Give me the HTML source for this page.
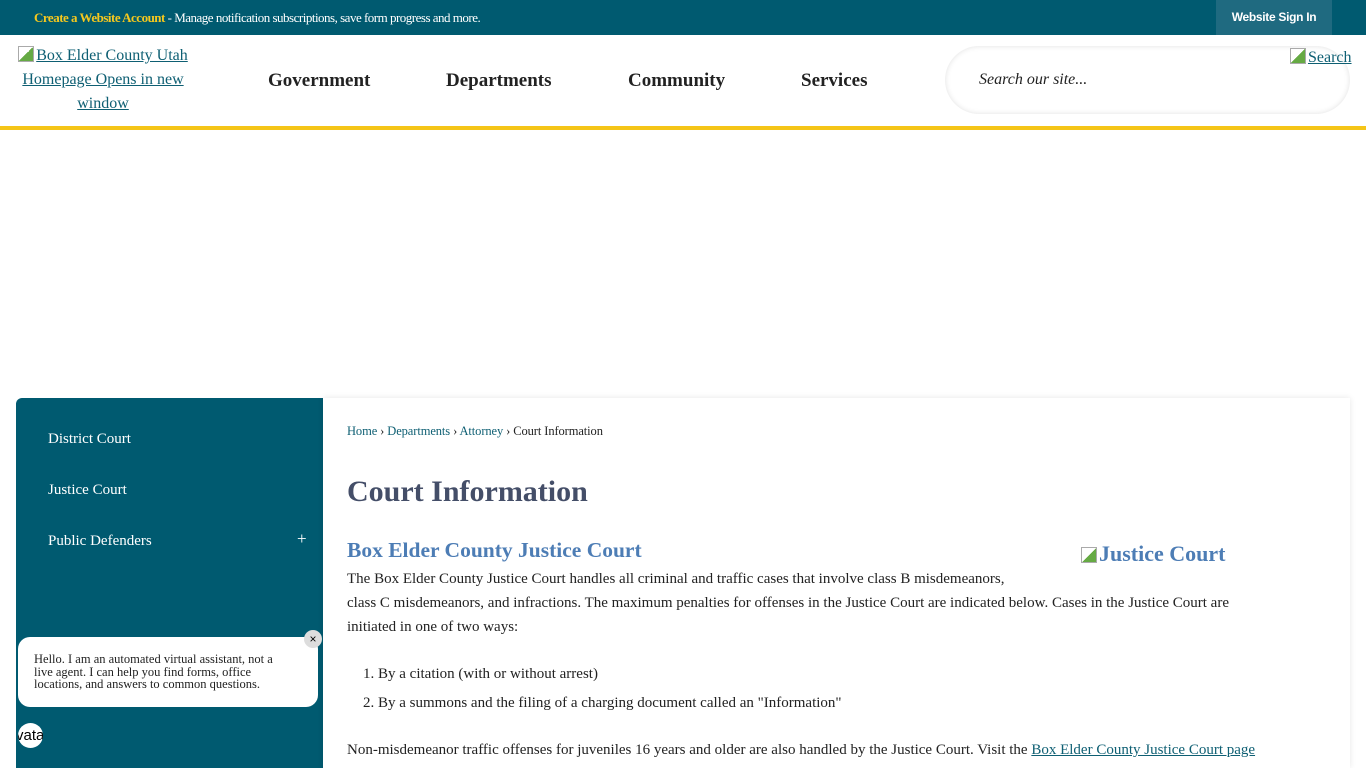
<!DOCTYPE html>
<html><head><meta charset="utf-8"><style>
*{box-sizing:border-box}
body{margin:0;width:1366px;height:768px;overflow:hidden;background:#fff;font-family:"Liberation Serif",serif;position:relative}
.top{position:absolute;left:0;top:0;width:1366px;height:35px;background:#005a70;}
.top .msg{position:absolute;left:34px;top:10px;font-size:13px;color:#fff;letter-spacing:-0.5px}
.top .msg b{color:#f5c81e}
.top .sign{position:absolute;left:1216px;top:0;width:116px;height:35px;background:#1f6a80;color:#fff;font-family:"Liberation Sans",sans-serif;font-weight:bold;font-size:12px;text-align:center;line-height:35px;letter-spacing:-0.3px}
.head{position:absolute;left:0;top:35px;width:1366px;height:91px;background:#fff}
.ybar{position:absolute;left:0;top:126px;width:1366px;height:4px;background:#f5c518}
a{color:#0e5f73}
.logo{position:absolute;left:14px;top:44px;width:178px;text-align:center;font-size:16px;line-height:24px}
.bi{display:inline-block;width:16px;height:16px;border:1px solid #aaa;background:linear-gradient(135deg,#fff 50%,#6a4 50%);vertical-align:-2px;margin-right:2px}
.nav{position:absolute;top:70px;font-size:19px;font-weight:bold;color:#222}
.search{position:absolute;left:945px;top:46px;width:405px;height:68px;border-radius:34px;box-shadow:0 0 6px rgba(0,0,0,.12) inset;background:#fff}
.search span{position:absolute;left:34px;top:25px;font-style:italic;font-size:16px;color:#222}
.sbtn{position:absolute;left:1290px;top:48px;font-size:16px}
.side{position:absolute;left:16px;top:398px;width:307px;height:370px;background:#005a70;border-radius:6px 0 0 0}
.side div{position:absolute;left:32px;color:#fff;font-size:15px}
.main{position:absolute;left:323px;top:398px;width:1027px;height:370px;background:#fff;box-shadow:0 0 6px rgba(0,0,0,.1)}
.crumb{position:absolute;left:347px;top:424px;font-size:12.5px;color:#222;letter-spacing:-0.1px}
.crumb a{text-decoration:none}
h1{position:absolute;left:347px;top:475px;margin:0;font-size:30px;color:#444e68}
h2{position:absolute;left:347px;top:538px;margin:0;font-size:21.5px;color:#4d7db5}
.img{position:absolute;left:1081px;top:541px;font-size:22px;font-weight:bold;color:#4d7db5}
.p{position:absolute;left:347px;font-size:15px;color:#222;line-height:24px;width:920px}
.chat{position:absolute;left:18px;top:637px;width:300px;height:70px;background:#fff;border-radius:12px;font-size:12.5px;line-height:12.5px;padding:16px 40px 16px 16px;color:#222}
.x{position:absolute;left:304px;top:630px;width:18px;height:18px;border-radius:9px;background:#ddd;font-size:12px;text-align:center;line-height:18px;font-family:"Liberation Sans",sans-serif}
.av{position:absolute;left:18px;top:723px;width:25px;height:25px;border-radius:13px;background:#fff;overflow:hidden;font-family:"Liberation Sans",sans-serif;font-size:15px;line-height:25px;text-indent:-2px}
</style></head><body>
<div class="top"><div class="msg"><b>Create a Website Account</b> - Manage notification subscriptions, save form progress and more.</div><div class="sign">Website Sign In</div></div>
<div class="head"></div>
<div class="logo"><span class="bi"></span><a href="#">Box Elder County Utah Homepage Opens in new window</a></div>
<div class="nav" style="left:268px">Government</div>
<div class="nav" style="left:446px">Departments</div>
<div class="nav" style="left:628px">Community</div>
<div class="nav" style="left:801px">Services</div>
<div class="search"><span>Search our site...</span></div>
<div class="sbtn"><span class="bi"></span><a href="#">Search</a></div>
<div class="ybar"></div>
<div class="side">
<div style="top:33px">District Court</div>
<div style="top:84px">Justice Court</div>
<div style="top:135px">Public Defenders</div>
<div style="top:131px;left:281px;font-size:17px">+</div>
</div>
<div class="main"></div>
<div class="crumb"><a href="#">Home</a> › <a href="#">Departments</a> › <a href="#">Attorney</a> › Court Information</div>
<h1>Court Information</h1>
<h2>Box Elder County Justice Court</h2>
<div class="img"><span class="bi"></span>Justice Court</div>
<div class="p" style="top:567px">The Box Elder County Justice Court handles all criminal and traffic cases that involve class B misdemeanors,<br>class C misdemeanors, and infractions. The maximum penalties for offenses in the Justice Court are indicated below. Cases in the Justice Court are<br>initiated in one of two ways:</div>
<div class="p" style="top:662px;left:363px">1. By a citation (with or without arrest)</div>
<div class="p" style="top:691px;left:363px">2. By a summons and the filing of a charging document called an "Information"</div>
<div class="p" style="top:738px;width:1000px">Non-misdemeanor traffic offenses for juveniles 16 years and older are also handled by the Justice Court. Visit the <a href="#">Box Elder County Justice Court page</a></div>
<div class="chat">Hello. I am an automated virtual assistant, not a live agent. I can help you find forms, office locations, and answers to common questions.</div>
<div class="x">×</div>
<div class="av">vata</div>
</body></html>
